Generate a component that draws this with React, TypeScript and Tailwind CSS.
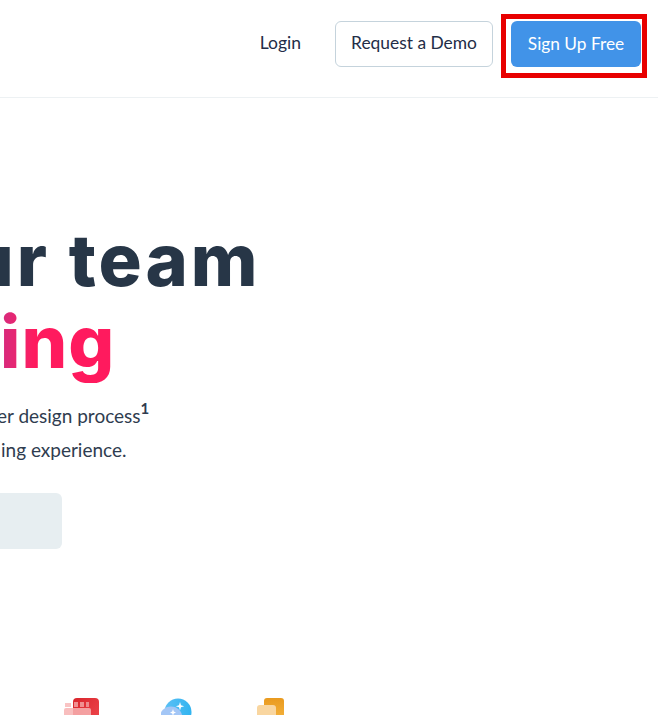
const lato = { fontFamily: "Lato, sans-serif" };

function TileIcon() {
  return (
    <svg width="36" height="17" viewBox="0 0 36 17" aria-hidden="true">
      <defs>
        <linearGradient id="tile" x1="0" y1="0" x2="1" y2="1">
          <stop offset="0" stopColor="#d9252c" />
          <stop offset="1" stopColor="#f04a50" />
        </linearGradient>
      </defs>
      <rect x="9" y="0" width="26" height="30" rx="4" fill="url(#tile)" />
      <rect x="0" y="10" width="27" height="20" rx="2" fill="#f7b3b3" opacity="0.85" />
      <rect x="1" y="5" width="6" height="4" fill="#f9c4c4" />
      <rect x="10" y="4" width="4" height="5" fill="#f08f90" />
      <rect x="16" y="4" width="4" height="5" fill="#f08f90" />
      <rect x="22" y="4" width="3" height="5" fill="#ee8a8c" />
    </svg>
  );
}

function SparkIcon() {
  return (
    <svg width="32" height="17" viewBox="0 0 32 17" aria-hidden="true">
      <defs>
        <linearGradient id="spark" x1="0" y1="0" x2="1" y2="0">
          <stop offset="0" stopColor="#5cc0f5" />
          <stop offset="1" stopColor="#31b4f0" />
        </linearGradient>
      </defs>
      <circle cx="17" cy="14" r="13.5" fill="url(#spark)" />
      <circle cx="10" cy="20" r="11.5" fill="#a3c6f6" />
      <path d="M19 4l1 3.2 3.2 1-3.2 1-1 3.2-1-3.2-3.2-1 3.2-1z" fill="#fff" />
      <path d="M12 11l.8 2.6 2.2.9-2.2.9-.8 2.6-.8-2.6-2.2-.9 2.2-.9z" fill="#fff" />
    </svg>
  );
}

function LayersIcon() {
  return (
    <svg width="28" height="17" viewBox="0 0 28 17" aria-hidden="true">
      <defs>
        <linearGradient id="layer" x1="0" y1="0" x2="0" y2="1">
          <stop offset="0" stopColor="#e99a1f" />
          <stop offset="1" stopColor="#f6b844" />
        </linearGradient>
      </defs>
      <rect x="7" y="0" width="20" height="26" rx="3" fill="url(#layer)" />
      <rect x="0" y="7" width="19" height="20" rx="3" fill="#f9d6a0" />
    </svg>
  );
}

export default function App() {
  return (
    <div className="h-[715px] w-[658px] overflow-hidden bg-white" style={lato}>
      {/* Top nav */}
      <header className="flex h-[98px] items-start justify-end border-b border-[#edf1f3] pt-[21px] pr-[17px]">
        <a className="mr-[34px] flex h-[46px] items-center pb-[1px] text-[17.5px] text-[#232d47]">Login</a>
        <button
          type="button"
          className="mr-[18px] h-[46px] w-[158px] rounded-md border border-[#c5d3dc] bg-white pb-[1px] text-[17.4px] text-[#232d47]"
        >
          Request a Demo
        </button>
        <div className="relative">
          <button
            type="button"
            className="h-[46px] w-[130px] rounded-md bg-[#4193e8] pb-[1px] text-[17.3px] text-white"
          >
            Sign Up Free
          </button>
          {/* red annotation box */}
          <div className="absolute top-[-7px] right-[-6px] bottom-[-11px] left-[-10px] border-[5px] border-[#e80000]" />
        </div>
      </header>

      {/* Hero, cropped on the left */}
      <section className="pt-[121px]">
        <h1
          className="-ml-[32px] whitespace-nowrap text-[72px] leading-[82px] font-extrabold tracking-[3px] text-[#273647]"
          style={{ fontFamily: "Inter, sans-serif" }}
        >
          ur team
        </h1>
        <div
          className="w-fit whitespace-nowrap bg-gradient-to-r from-[#d42a7e] to-[#ff1a5e] to-[35px] bg-clip-text text-[72px] leading-[82px] font-extrabold tracking-[1px] text-transparent"
          style={{ fontFamily: "Inter, sans-serif" }}
        >
          ing
        </div>
        <p className="mt-[16px] -ml-[3px] whitespace-nowrap text-[19px] leading-[34px] text-[#2f3c4f]">
          er design process
          <sup className="-top-[9.5px] text-[15px] font-bold">1</sup>
        </p>
        <p className="ml-[1px] whitespace-nowrap text-[19px] leading-[34px] text-[#2f3c4f]">
          ing experience.
        </p>
        <div className="mt-[26px] h-[56px] w-[62px] rounded-r-md bg-[#e7eef1]" />
      </section>

      {/* Feature icons */}
      <div className="mt-[149px] flex items-start pl-[64px]">
        <TileIcon />
        <div className="ml-[61px]">
          <SparkIcon />
        </div>
        <div className="ml-[64px]">
          <LayersIcon />
        </div>
      </div>
    </div>
  );
}
